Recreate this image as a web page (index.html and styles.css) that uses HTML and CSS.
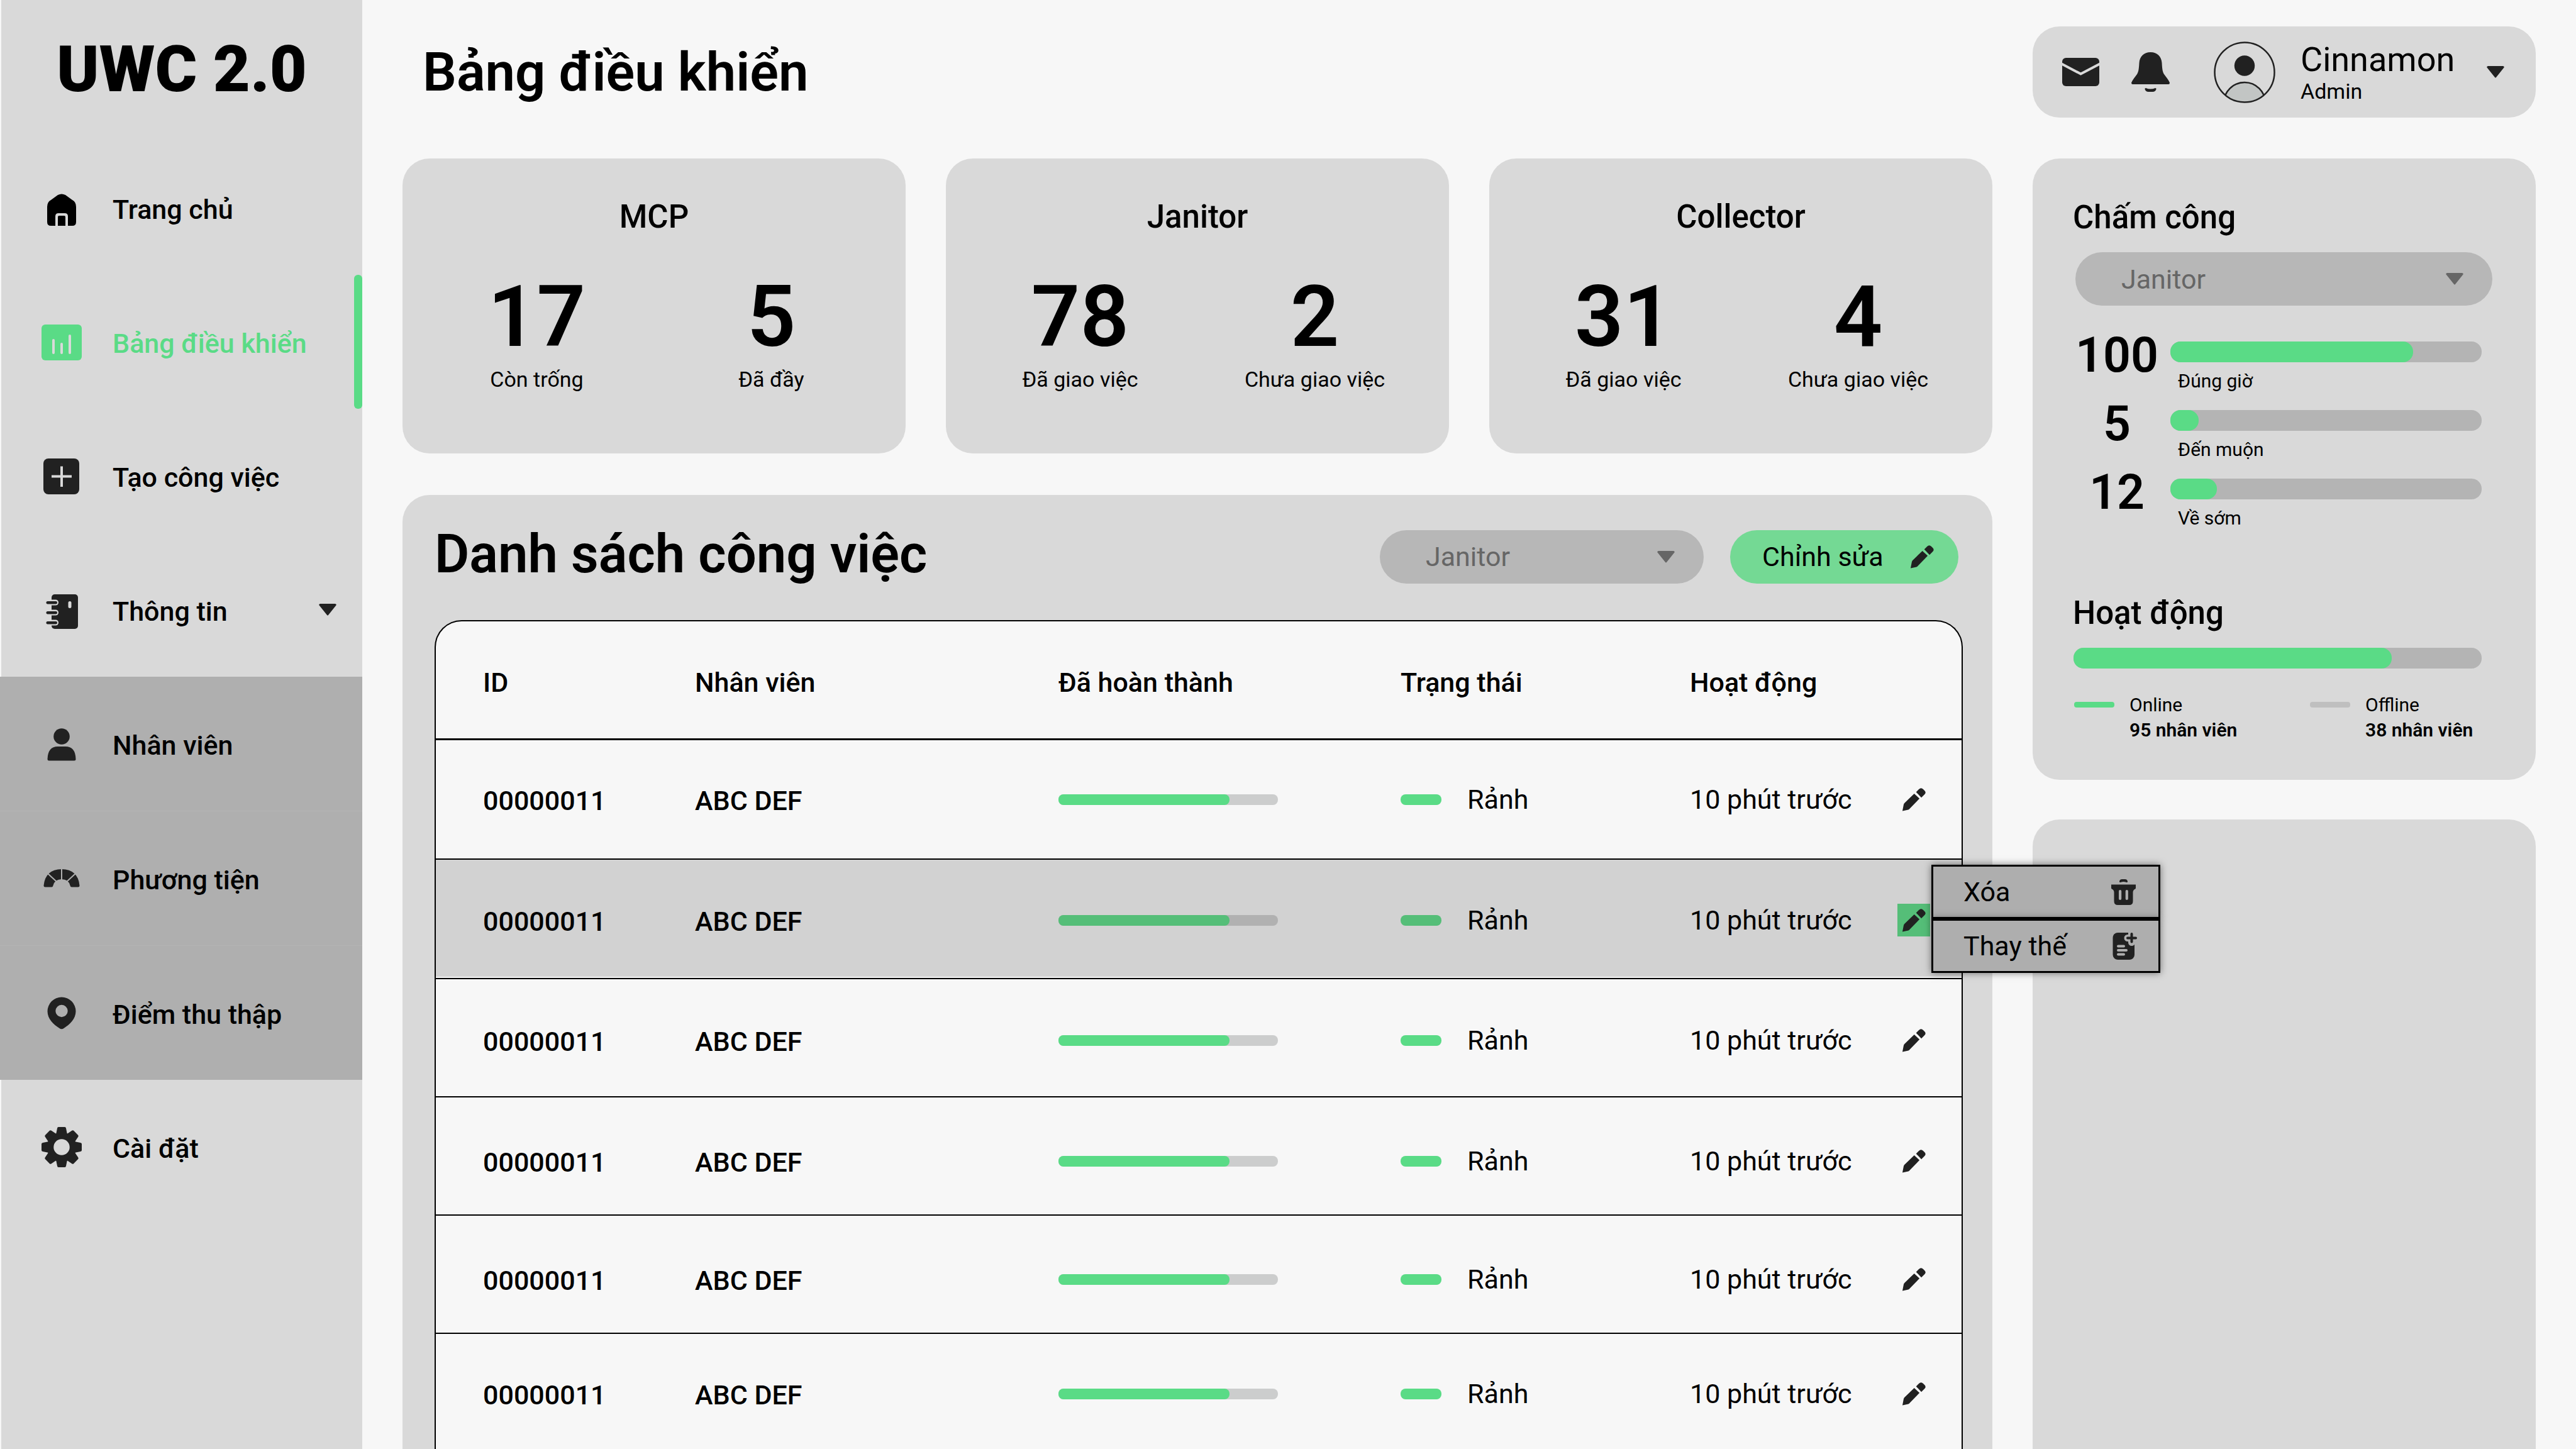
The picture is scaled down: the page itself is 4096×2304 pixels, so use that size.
FILE: index.html
```html
<!DOCTYPE html>
<html lang="vi">
<head>
<meta charset="utf-8">
<title>UWC 2.0</title>
<meta name="viewport" content="width=device-width, initial-scale=1">
<link rel="stylesheet" href="styles.css">
</head>
<body>
<svg class="sprite" aria-hidden="true">
  <symbol id="caret" viewBox="0 0 28 19"><path d="M2 0H26Q29 1 27 3L15 18Q14 19 13 18L1 3Q-1 1 2 0Z"/></symbol>
  <symbol id="pencil" viewBox="0 0 75 75"><path d="M0 74L4 53Q5 50 7 48L38 18L55 34L24 66Q22 69 19 70Z"/><path d="M44 13L53 4Q60 -3 67 4L72 9Q77 15 71 21L61 31Z"/></symbol>
</svg>
<div class="app">
  <aside class="sidebar">
    <div class="logo">UWC 2.0</div>
    <nav class="nav">
      <a class="nav-item" href="#home">
        <svg class="nav-icon nav-icon-black" viewBox="0 0 64 64"><path d="M26 11Q32 8 38 11L49 19Q55 22 55 30V54Q55 60 49 60H42V45Q42 40 37 40H27Q22 40 22 45V60H15Q9 60 9 54V30Q9 22 15 19Z"/><path d="M26 60V46Q26 44 28 44H36Q38 44 38 46V60Z"/></svg>
        <span class="nav-label">Trang chủ</span>
      </a>
      <a class="nav-item nav-item-active" href="#dashboard" aria-current="page">
        <svg class="nav-icon" viewBox="0 0 64 64"><rect y="4" width="64" height="57" rx="6"/><g class="cut"><rect x="17" y="27" width="4" height="24" rx="2"/><rect x="30" y="33" width="4" height="18" rx="2"/><rect x="43" y="20" width="4" height="31" rx="2"/></g></svg>
        <span class="nav-label">Bảng điều khiển</span>
      </a>
      <a class="nav-item" href="#new-task">
        <svg class="nav-icon" viewBox="0 0 64 64"><rect x="3" y="4" width="57" height="57" rx="8"/><path class="cut" d="M16 30.5H30V16.500H34V30.500H48V34.500H34V49H30V34.500H16Z"/></svg>
        <span class="nav-label">Tạo công việc</span>
      </a>
      <button class="nav-item" type="button" aria-expanded="true">
        <svg class="nav-icon" viewBox="0 0 64 64"><rect x="16" y="7" width="42" height="55" rx="5"/><g class="cut"><path d="M14 15.500H22.500a4.500 4.500 0 0 1 0 9H14Z"/><path d="M14 31.500H22.500a4.500 4.500 0 0 1 0 9H14Z"/><path d="M14 47.500H22.500a4.500 4.500 0 0 1 0 9H14Z"/><rect x="42.500" y="18" width="5" height="11" rx="2.500"/></g><rect x="7.500" y="18" width="17.500" height="4.500" rx="2.200"/><rect x="7.500" y="34" width="17.500" height="4.500" rx="2.200"/><rect x="7.500" y="50" width="17.500" height="4.500" rx="2.200"/></svg>
        <span class="nav-label">Thông tin</span>
        <svg class="caret nav-caret"><use href="#caret"/></svg>
      </button>
      <div class="subnav">
        <a class="nav-item" href="#staff">
          <svg class="nav-icon" viewBox="0 0 64 64"><circle cx="32" cy="20" r="12.800"/><path d="M9.500 56Q10 36 26 36H38Q54 36 54.500 56Q54.500 58.500 52 58.500H12Q9.500 58.500 9.500 56Z"/></svg>
          <span class="nav-label">Nhân viên</span>
        </a>
        <a class="nav-item" href="#vehicles">
          <svg class="nav-icon" viewBox="0 0 64 64"><path d="M3.500 43Q6 17.500 32 17Q58 17.500 60.500 43Q60.500 45.500 58 45.500H48Q46 45.500 45.500 43Q43 33 32 33Q21 33 18.500 43Q18 45.500 16 45.500H6Q3.500 45.500 3.500 43Z"/><path class="seam" d="M32 15V34M9.500 23.500L24 37M54.500 23.500L40 37"/></svg>
          <span class="nav-label">Phương tiện</span>
        </a>
        <a class="nav-item" href="#points">
          <svg class="nav-icon" viewBox="0 0 64 64"><path fill-rule="evenodd" d="M32 6.500A22.500 22.500 0 0 1 54.500 29C54.500 41 45 50 35.500 56Q32 58.500 28.500 56C19 50 9.500 41 9.500 29A22.500 22.500 0 0 1 32 6.500ZM32 18.800a9.700 9.700 0 1 0 0 19.400a9.700 9.700 0 1 0 0 -19.400Z"/></svg>
          <span class="nav-label">Điểm thu thập</span>
        </a>
      </div>
      <a class="nav-item" href="#settings">
        <svg class="nav-icon" viewBox="0 0 64 64"><circle class="ring" cx="32" cy="32" r="18"/><g id="teeth"><path id="tooth" d="M23 12L25 2Q25.300 0 27 0H37Q38.700 0 39 2L41 12Z"/><use href="#tooth" transform="rotate(45 32 32)"/><use href="#tooth" transform="rotate(90 32 32)"/><use href="#tooth" transform="rotate(135 32 32)"/></g><use href="#teeth" transform="rotate(180 32 32)"/></svg>
        <span class="nav-label">Cài đặt</span>
      </a>
    </nav>
  </aside>

  <main class="main">
    <h1 class="page-title">Bảng điều khiển</h1>
    <header class="profile">
      <svg class="icon-mail" viewBox="0 0 59 45"><rect width="59" height="45" rx="6"/><path class="flap" d="M-1 9.500L29.500 25.500L60 9.500"/></svg>
      <svg class="icon-bell" viewBox="0 0 61 63"><path d="M30.500 0C41 0 48 7 48.500 17C49 26 49.500 31 52 35C55 39 59 44 61 48.500Q61 51 59 51H2Q0 51 0 48.500C2 44 6 39 9 35C11.500 31 12 26 12.500 17C13 7 20 0 30.500 0Z"/><path d="M23 57Q30.500 60 38 57Q40 57 39.500 59Q38 63 34 63H27Q23 63 21.500 59Q21 57 23 57Z"/></svg>
      <svg class="icon-avatar" viewBox="0 0 98 98"><defs><clipPath id="face"><circle cx="49" cy="49" r="48"/></clipPath></defs><circle class="shoulders" cx="49" cy="98" r="33" clip-path="url(#face)"/><circle class="outline" cx="49" cy="49" r="47.500"/><circle cx="49" cy="38.500" r="16.200"/></svg>
      <div class="profile-text">
        <div class="profile-name">Cinnamon</div>
        <div class="profile-role">Admin</div>
      </div>
      <svg class="caret profile-caret"><use href="#caret"/></svg>
    </header>

    <div class="content">
      <section class="cards">
        <article class="card">
          <h2 class="card-title">MCP</h2>
          <div class="card-stats">
            <div class="stat"><div class="stat-value">17</div><div class="stat-label">Còn trống</div></div>
            <div class="stat"><div class="stat-value">5</div><div class="stat-label">Đã đầy</div></div>
          </div>
        </article>
        <article class="card">
          <h2 class="card-title">Janitor</h2>
          <div class="card-stats">
            <div class="stat"><div class="stat-value">78</div><div class="stat-label">Đã giao việc</div></div>
            <div class="stat"><div class="stat-value">2</div><div class="stat-label">Chưa giao việc</div></div>
          </div>
        </article>
        <article class="card">
          <h2 class="card-title">Collector</h2>
          <div class="card-stats">
            <div class="stat"><div class="stat-value">31</div><div class="stat-label">Đã giao việc</div></div>
            <div class="stat"><div class="stat-value">4</div><div class="stat-label">Chưa giao việc</div></div>
          </div>
        </article>
      </section>

      <section class="jobs">
        <div class="jobs-head">
          <h2 class="jobs-title">Danh sách công việc</h2>
          <div class="select jobs-select">
            <select aria-label="Vai trò"><option>Janitor</option></select>
            <svg class="caret"><use href="#caret"/></svg>
          </div>
          <button class="edit-button" type="button">Chỉnh sửa <svg class="pencil"><use href="#pencil"/></svg></button>
        </div>
        <div class="table-frame">
          <table class="table">
            <colgroup><col class="col-id"><col><col class="col-done"><col class="col-status"><col class="col-time"><col class="col-edit"></colgroup>
            <thead>
              <tr><th>ID</th><th>Nhân viên</th><th>Đã hoàn thành</th><th>Trạng thái</th><th>Hoạt động</th><td></td></tr>
            </thead>
            <tbody>
              <tr>
                <td class="strong">00000011</td><td class="strong">ABC DEF</td>
                <td><div class="bar bar-thin"><div class="fill" style="width:78%"></div></div></td>
                <td><div class="status"><span class="dash"></span>Rảnh</div></td>
                <td>10 phút trước</td>
                <td><button class="row-edit" type="button" aria-label="Chỉnh sửa"><svg class="pencil"><use href="#pencil"/></svg></button></td>
              </tr>
              <tr class="selected">
                <td class="strong">00000011</td><td class="strong">ABC DEF</td>
                <td><div class="bar bar-thin"><div class="fill" style="width:78%"></div></div></td>
                <td><div class="status"><span class="dash"></span>Rảnh</div></td>
                <td>10 phút trước</td>
                <td class="menu-cell">
                  <button class="row-edit" type="button" aria-label="Chỉnh sửa" aria-expanded="true"><svg class="pencil"><use href="#pencil"/></svg></button>
                  <div class="menu">
                    <button class="menu-item" type="button">Xóa
                      <svg class="menu-icon" viewBox="0 0 44 44"><path d="M15 6.500V5Q16 2 19 2H24Q27 2 28 5V6.500Q26 7.500 25 6.500Q21.500 5.500 18 6.500Q17 7.500 15 6.500Z"/><path d="M2 10.500H41V16Q41 17 40 17.500Q36.500 19 36.500 23V37Q36.500 43 30.500 43H12.500Q6.500 43 6.500 37V23Q6.500 19 3 17.500Q2 17 2 16Z"/><g class="menu-cut"><rect x="14" y="19" width="4.200" height="16" rx="2"/><rect x="24.700" y="19" width="4.200" height="16" rx="2"/></g></svg>
                    </button>
                    <button class="menu-item" type="button">Thay thế
                      <svg class="menu-icon" viewBox="0 0 44 44"><rect x="4.500" y="1" width="34.500" height="43" rx="8"/><path class="menu-halo" d="M34.500 1V16.500M28 9.500H42"/><path class="menu-plus" d="M34.500 3V15.500M28 9.500H41"/><g class="menu-cut"><rect x="11" y="20.500" width="13" height="4" rx="2"/><rect x="11" y="27" width="17" height="4" rx="2"/><rect x="11" y="33.500" width="13" height="4" rx="2"/></g></svg>
                    </button>
                  </div>
                </td>
              </tr>
              <tr>
                <td class="strong">00000011</td><td class="strong">ABC DEF</td>
                <td><div class="bar bar-thin"><div class="fill" style="width:78%"></div></div></td>
                <td><div class="status"><span class="dash"></span>Rảnh</div></td>
                <td>10 phút trước</td>
                <td><button class="row-edit" type="button" aria-label="Chỉnh sửa"><svg class="pencil"><use href="#pencil"/></svg></button></td>
              </tr>
              <tr>
                <td class="strong">00000011</td><td class="strong">ABC DEF</td>
                <td><div class="bar bar-thin"><div class="fill" style="width:78%"></div></div></td>
                <td><div class="status"><span class="dash"></span>Rảnh</div></td>
                <td>10 phút trước</td>
                <td><button class="row-edit" type="button" aria-label="Chỉnh sửa"><svg class="pencil"><use href="#pencil"/></svg></button></td>
              </tr>
              <tr>
                <td class="strong">00000011</td><td class="strong">ABC DEF</td>
                <td><div class="bar bar-thin"><div class="fill" style="width:78%"></div></div></td>
                <td><div class="status"><span class="dash"></span>Rảnh</div></td>
                <td>10 phút trước</td>
                <td><button class="row-edit" type="button" aria-label="Chỉnh sửa"><svg class="pencil"><use href="#pencil"/></svg></button></td>
              </tr>
              <tr>
                <td class="strong">00000011</td><td class="strong">ABC DEF</td>
                <td><div class="bar bar-thin"><div class="fill" style="width:78%"></div></div></td>
                <td><div class="status"><span class="dash"></span>Rảnh</div></td>
                <td>10 phút trước</td>
                <td><button class="row-edit" type="button" aria-label="Chỉnh sửa"><svg class="pencil"><use href="#pencil"/></svg></button></td>
              </tr>
            </tbody>
          </table>
        </div>
      </section>
    </div>

    <div class="side">
      <section class="attendance">
        <h2 class="card-title">Chấm công</h2>
        <div class="select">
          <select aria-label="Vai trò chấm công"><option>Janitor</option></select>
          <svg class="caret"><use href="#caret"/></svg>
        </div>
        <div class="counts">
          <div class="count"><div class="count-value">100</div><div class="count-body"><div class="bar"><div class="fill" style="width:78%"></div></div><div class="count-label">Đúng giờ</div></div></div>
          <div class="count"><div class="count-value">5</div><div class="count-body"><div class="bar"><div class="fill" style="width:9%"></div></div><div class="count-label">Đến muộn</div></div></div>
          <div class="count"><div class="count-value">12</div><div class="count-body"><div class="bar"><div class="fill" style="width:15%"></div></div><div class="count-label">Về sớm</div></div></div>
        </div>
        <h2 class="card-title">Hoạt động</h2>
        <div class="bar activity-bar"><div class="fill" style="width:78%"></div></div>
        <div class="legend">
          <div class="legend-item"><span class="legend-dash"></span><div>Online<br><b>95 nhân viên</b></div></div>
          <div class="legend-item"><span class="legend-dash legend-dash-off"></span><div>Offline<br><b>38 nhân viên</b></div></div>
        </div>
      </section>
      <section class="blank-panel"></section>
    </div>
  </main>
</div>
</body>
</html>
```
FILE: styles.css
```css
:root {
  --page: #f7f7f7;
  --panel: #d9d9d9;
  --green: #5adb86;
  --track: #b4b4b4;
  --ink: #212121;
  --radius: 43px;
}

* { box-sizing: border-box; }

body {
  margin: 0;
  background: var(--page);
  color: #000;
  font-family: Roboto, "Liberation Sans", sans-serif;
  font-size: 43px;
  line-height: 50px;
}

h1, h2 { margin: 0; font-weight: 500; }
button, select { font: inherit; color: inherit; border: 0; background: none; padding: 0; margin: 0; }
button { cursor: pointer; text-align: left; }
svg { display: block; flex: none; fill: var(--ink); }
.sprite { position: absolute; width: 0; height: 0; }
.caret { width: 28px; height: 19px; }
.pencil { width: 37px; height: 37px; }

.app {
  display: grid;
  grid-template-columns: 576px 1fr;
  height: 100vh;
  overflow: hidden;
}

/* Sidebar */
.sidebar {
  background: var(--panel);
  border-left: 2px solid var(--page);
  padding-top: 50px;
}
.logo {
  margin-bottom: 54px;
  text-align: center;
  font-size: 102px;
  line-height: 120px;
  font-weight: 900;
}
.nav-item {
  position: relative;
  display: flex;
  align-items: center;
  gap: 49px;
  width: 100%;
  height: 213px;
  padding-left: 64px;
  color: #000;
  font-weight: 500;
  text-decoration: none;
}
.nav-icon { width: 64px; height: 64px; }
.nav-icon-black { fill: #000; }
.nav-label { padding-top: 4px; }
.nav-caret { margin-left: auto; margin-right: 41px; }
.nav-item-active { color: var(--green); }
.nav-item-active .nav-icon { fill: var(--green); }
.nav-item-active::after {
  content: "";
  position: absolute;
  right: 0;
  top: 0;
  bottom: 0;
  width: 13px;
  border-radius: 6px;
  background: var(--green);
}
.cut { fill: var(--panel); }
.ring { fill: none; stroke: var(--ink); stroke-width: 10.500; }
.seam { stroke: #afafaf; stroke-width: 2; }
.subnav {
  margin-left: -2px;
  background: #afafaf;
}
.subnav .nav-item { padding-left: 66px; }
.subnav .nav-item + .nav-item { height: 214px; border-top: 1px solid #b4b4b4; }

/* Main area */
.main {
  display: grid;
  grid-template-columns: repeat(4, 1fr);
  grid-template-rows: 145px 1fr;
  column-gap: 64px;
  row-gap: 65px;
  padding: 42px 64px 0;
  min-height: 0;
}
.page-title {
  grid-column: span 3;
  align-self: center;
  padding-left: 32px;
  font-size: 85px;
  line-height: 100px;
  font-weight: 600;
}
.profile {
  display: flex;
  align-items: center;
  padding: 0 50px 0 47px;
  border-radius: var(--radius);
  background: var(--panel);
}
.icon-mail { width: 59px; height: 45px; margin-right: 51px; }
.icon-bell { width: 61px; height: 63px; margin-right: 70px; }
.icon-avatar { width: 98px; height: 98px; margin-right: 40px; overflow: visible; }
.flap { fill: none; stroke: var(--panel); stroke-width: 4; }
.outline { fill: none; stroke: var(--ink); stroke-width: 2.500; }
.shoulders { fill: #c2c5c4; stroke: var(--ink); stroke-width: 2.500; }
.profile-name { font-size: 54px; line-height: 60px; }
.profile-role { font-size: 34px; line-height: 40px; }
.profile-caret { margin-left: auto; }

.content { grid-column: span 3; display: flex; flex-direction: column; gap: 66px; min-width: 0; min-height: 0; }
.cards { display: grid; grid-template-columns: repeat(3, 1fr); gap: 64px; }
.card {
  padding: 63px 27px 98px;
  border-radius: var(--radius);
  background: var(--panel);
  text-align: center;
}
.card-title { font-size: 51px; line-height: 60px; }
.card-stats { display: grid; grid-template-columns: 1fr 1fr; margin-top: 50px; }
.stat-value { font-size: 136px; line-height: 158px; font-weight: 600; }
.stat-label { font-size: 34px; line-height: 40px; }

/* Job list */
.jobs {
  flex: 1;
  min-height: 0;
  display: flex;
  flex-direction: column;
  padding: 44px 47px 0 51px;
  border-radius: var(--radius) var(--radius) 0 0;
  background: var(--panel);
}
.jobs-head {
  display: flex;
  align-items: center;
  gap: 42px;
  padding-right: 7px;
  margin-bottom: 47px;
}
.jobs-title {
  margin-right: auto;
  padding-bottom: 8px;
  font-size: 85px;
  line-height: 100px;
  font-weight: 600;
}
.select { position: relative; height: 85px; }
.select select {
  appearance: none;
  width: 100%;
  height: 100%;
  padding: 0 73px;
  border-radius: var(--radius);
  background: #b7b7b7;
  color: #666;
}
.select .caret {
  position: absolute;
  right: 46px;
  top: 33px;
  fill: #666;
  pointer-events: none;
}
.jobs-select { width: 515px; }
.edit-button {
  display: flex;
  align-items: center;
  justify-content: space-between;
  width: 363px;
  height: 85px;
  padding: 0 39px 0 51px;
  border-radius: var(--radius);
  background: #74d994;
}
.table-frame {
  flex: 1;
  min-height: 0;
  border: 2px solid #000;
  border-bottom: 0;
  border-radius: var(--radius) var(--radius) 0 0;
  background: var(--page);
}
.table {
  width: 100%;
  table-layout: fixed;
  border-collapse: separate;
  border-spacing: 0;
}
.table th, .table td {
  height: 190px;
  padding: 0;
  border-bottom: 2px solid #000;
  text-align: left;
  vertical-align: middle;
}
.table thead th, .table thead td { height: 189px; border-bottom-width: 3px; padding-top: 8px; font-weight: 500; }
.table th:first-child, .table td:first-child { padding-left: 75px; }
.table tbody td.strong { padding-top: 4px; font-weight: 500; }
.table tbody tr:nth-child(n+3) td { height: 188px; padding-top: 8px; }
.table tbody tr:nth-child(4) td, .table tbody tr:nth-child(5) td { padding-top: 16px; }
.table tbody tr:nth-child(n+3) td.strong { padding-top: 12px; }
.table tbody tr:nth-child(4) td.strong, .table tbody tr:nth-child(5) td.strong { padding-top: 20px; }
.table tbody tr:nth-child(6) td { padding-top: 4px; }
.table tbody tr:nth-child(6) td.strong { padding-top: 8px; }
.col-id { width: 412px; }
.col-done { width: 544px; }
.col-status { width: 460px; }
.col-time { width: 330px; }
.col-edit { width: 102px; }

.bar { height: 33px; border-radius: 16px; background: var(--track); }
.fill { height: 100%; border-radius: inherit; background: var(--green); }
.bar-thin { width: 349px; height: 17px; border-radius: 8px; background: #cccdcd; }
.status { display: flex; align-items: center; gap: 41px; }
.dash { width: 65px; height: 17px; border-radius: 8px; background: var(--green); }
.row-edit { display: grid; place-items: center; width: 52px; height: 52px; }
.table .selected td { padding-top: 4px; background: #d2d2d2; box-shadow: inset 0 -2px var(--page); }
.table .selected td.strong { padding-top: 8px; }
.selected .bar { background: #b1b1b1; }
.selected .fill, .selected .dash, .selected .row-edit { background: #55be78; }

.menu-cell { position: relative; }
.menu {
  position: absolute;
  left: 54px;
  top: 8px;
  width: 364px;
  z-index: 1;
}
.menu-item {
  display: flex;
  align-items: center;
  justify-content: space-between;
  width: 100%;
  height: 86px;
  padding: 0 33px 0 48px;
  border: 3px solid #000;
  background: #aeaeae;
  box-shadow: 0 0 11px rgba(0, 0, 0, 0.5);
}
.menu-icon { width: 44px; height: 44px; overflow: visible; }
.menu-cut { fill: #aeaeae; }
.menu-halo { stroke: #aeaeae; stroke-width: 11; stroke-linecap: round; }
.menu-plus { stroke: var(--ink); stroke-width: 4; stroke-linecap: round; }

/* Right column */
.side { display: flex; flex-direction: column; gap: 63px; min-height: 0; }
.attendance {
  padding: 64px 69px 59px 64px;
  border-radius: var(--radius);
  background: var(--panel);
}
.attendance .select { margin: 25px 0 34px 4px; }
.counts { margin-bottom: 98px; }
.count { display: grid; grid-template-columns: 140px 1fr; column-gap: 15px; height: 109px; padding-right: 17px; }
.count-value { font-size: 77px; line-height: 90px; font-weight: 600; text-align: center; }
.count-body { padding-top: 23px; }
.count-label { margin-top: 12px; padding-left: 12px; font-size: 30px; line-height: 36px; }
.activity-bar { margin: 25px 17px 38px 1px; }
.legend { display: grid; grid-template-columns: 375px 1fr; padding-left: 2px; font-size: 30px; line-height: 40px; }
.legend-item { display: flex; gap: 24px; }
.legend b { font-weight: 600; }
.legend-dash { width: 64px; height: 9px; margin-top: 15px; border-radius: 4px; background: var(--green); }
.legend-dash-off { background: #bfbfbf; }
.blank-panel { flex: 1; border-radius: var(--radius) var(--radius) 0 0; background: var(--panel); }
```
